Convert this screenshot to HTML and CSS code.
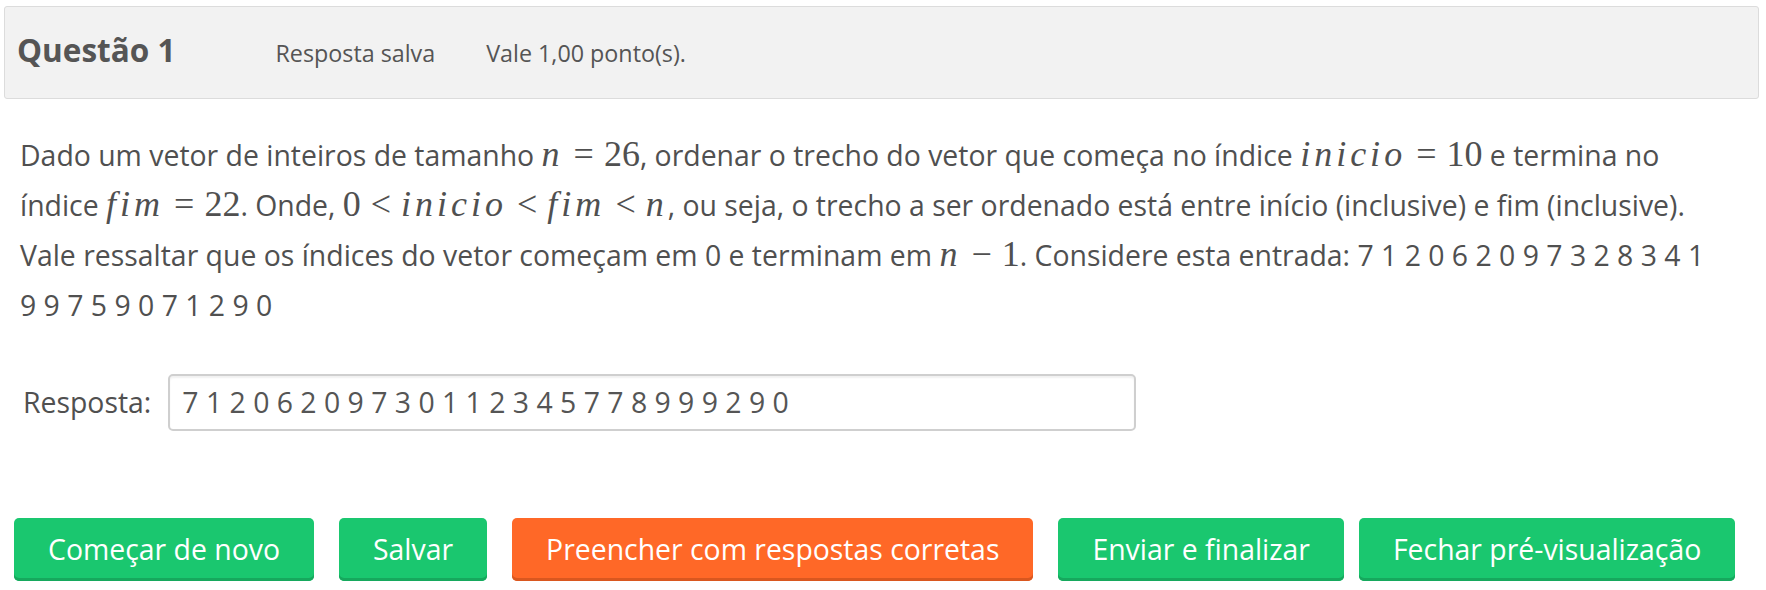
FILE: index.html
```html
<!DOCTYPE html>
<html lang="pt-BR">
<head>
<meta charset="utf-8">
<title>Questão 1</title>
<link rel="stylesheet" href="styles.css">
</head>
<body>
<div class="que">
  <div class="info">
    <h3 class="no">Questão <span class="qno">1</span></h3>
    <span class="state">Resposta salva</span>
    <span class="grade">Vale 1,00 ponto(s).</span>
  </div>
  <div class="content">
    <p class="qtext">Dado um vetor de inteiros de tamanho <span class="math"><i>n</i><span class="rel">=</span>26</span>, ordenar o trecho do vetor que começa no índice <span class="math"><i>inicio</i><span class="rel">=</span>10</span> e termina no índice <span class="math"><i>fim</i><span class="rel">=</span>22</span>. Onde, <span class="math">0<span class="rel">&lt;</span><i>inicio</i><span class="rel">&lt;</span><i>fim</i><span class="rel">&lt;</span><i>n</i></span>, ou seja, o trecho a ser ordenado está entre início (inclusive) e fim (inclusive). Vale ressaltar que os índices do vetor começam em 0 e terminam em <span class="math"><i>n</i><span class="bin">−</span>1</span>. Considere esta entrada: 7 1 2 0 6 2 0 9 7 3 2 8 3 4 1 9 9 7 5 9 0 7 1 2 9 0</p>
    <div class="ablock">
      <label class="alabel" for="resp">Resposta:</label>
      <input class="answer" id="resp" type="text" value="7 1 2 0 6 2 0 9 7 3 0 1 1 2 3 4 5 7 7 8 9 9 9 2 9 0">
    </div>
  </div>
</div>
<div class="btns">
  <div class="btn-group">
    <button class="btn green">Começar de novo</button>
    <button class="btn green">Salvar</button>
    <button class="btn orange">Preencher com respostas corretas</button>
    <button class="btn green">Enviar e finalizar</button>
  </div>
  <button class="btn green">Fechar pré-visualização</button>
</div>
</body>
</html>
```

FILE: styles.css
```css
html, body {
  margin: 0;
  padding: 0;
  background: #ffffff;
}

body {
  font-family: "Open Sans", "Noto Sans", sans-serif;
  font-size: 28.4px;
  color: #505050;
}

.que {
  margin: 6px 7px 0 4px;
}

.info {
  display: flex;
  align-items: baseline;
  background: #f2f2f2;
  border: 1px solid #dcdcdc;
  border-radius: 3px;
  padding: 24px 14px 29px 12px;
}

.no {
  margin: 0;
  font-size: 31.5px;
  font-weight: 700;
  line-height: 1.2;
  color: #555555;
  margin-right: 100px;
}

.state, .grade {
  font-size: 23.3px;
  color: #555555;
  line-height: 1.2;
}

.state {
  margin-right: 51px;
}

.content {
  padding: 31px 38px 0 16px;
}

.qtext {
  margin: 0;
  line-height: 50px;
}

.math {
  font-family: "Liberation Serif", "DejaVu Serif", serif;
  font-size: 36px;
  line-height: 1;
  white-space: nowrap;
}

.math i {
  font-style: italic;
  font-size: 36px;
  letter-spacing: 4px;
}

.rel {
  padding: 0 10px;
}

.bin {
  padding: 0 10px;
}

.ablock {
  display: flex;
  align-items: center;
  margin-top: 44px;
}

.alabel {
  margin-left: 3px;
  margin-right: 17px;
}

.answer {
  width: 968px;
  height: 57px;
  box-sizing: border-box;
  border: 2px solid #cfcfcf;
  border-radius: 5px;
  box-shadow: inset 0 2px 2px rgba(0, 0, 0, 0.06);
  padding: 0 12px;
  font-family: "Open Sans", "Noto Sans", sans-serif;
  font-size: 28.4px;
  color: #555555;
  background: #ffffff;
  outline: none;
}

.btns {
  display: flex;
  gap: 15px;
  margin: 87px 0 0 14px;
}

.btn-group {
  display: flex;
  gap: 25px;
}

.btn {
  height: 63px;
  box-sizing: border-box;
  border: none;
  border-radius: 5px;
  padding: 0 34px;
  font-family: "Open Sans", "Noto Sans", sans-serif;
  font-size: 28.4px;
  color: #ffffff;
  cursor: pointer;
}

.green {
  background: #1ac76f;
  box-shadow: inset 0 -3px 0 #16a85d;
}

.orange {
  background: #ff6827;
  box-shadow: inset 0 -3px 0 #d9571f;
}
```
